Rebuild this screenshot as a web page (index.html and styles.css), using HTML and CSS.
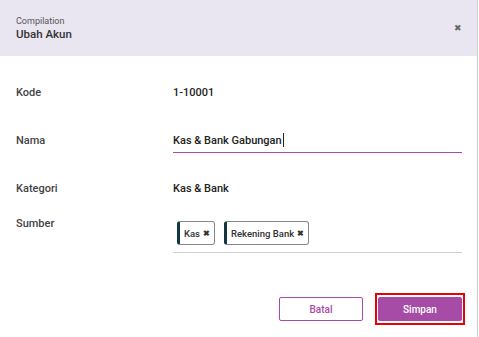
FILE: index.html
```html
<!DOCTYPE html>
<html lang="id">
<head>
  <meta charset="UTF-8">
  <title>Ubah Akun</title>
  <link rel="stylesheet" href="styles.css">
</head>
<body>
  <div class="dialog">
    <div class="header">
      <div class="titles">
        <div class="subtitle">Compilation</div>
        <div class="title">Ubah Akun</div>
      </div>
      <span class="close">&#x2716;</span>
    </div>

    <div class="form">
      <div class="row">
        <div class="label">Kode</div>
        <div class="value">1-10001</div>
      </div>
      <div class="row">
        <div class="label">Nama</div>
        <div class="value input">Kas &amp; Bank Gabungan<span class="caret"></span></div>
      </div>
      <div class="row">
        <div class="label">Kategori</div>
        <div class="value">Kas &amp; Bank</div>
      </div>
      <div class="row row-tags">
        <div class="label">Sumber</div>
        <div class="value tags">
          <span class="tag">Kas <b>&#x2716;</b></span>
          <span class="tag">Rekening Bank <b>&#x2716;</b></span>
        </div>
      </div>
    </div>

    <div class="actions">
      <button class="btn btn-outline">Batal</button>
      <span class="highlight"><button class="btn btn-primary">Simpan</button></span>
    </div>
  </div>
</body>
</html>
```

FILE: styles.css
```css
body {
  margin: 0;
  font-family: Roboto, "Liberation Sans", sans-serif;
  color: #333;
  background: #fff;
}
.dialog {
  width: 477px;
  height: 337px;
  border-right: 1px solid #cfcfcf;
  background: #fff;
}
.header {
  height: 56px;
  background: #e9e6f1;
  display: flex;
  align-items: center;
  justify-content: space-between;
  padding: 0 15px 0 16px;
}
.subtitle {
  font-size: 9px;
  color: #555;
  margin-bottom: 1px;
}
.title {
  font-size: 11.5px;
  font-weight: 500;
  color: #333;
}
.close {
  font-size: 9px;
  color: #666;
}
.form {
  padding: 12px 15px 0 16px;
}
.row {
  display: flex;
  align-items: center;
  height: 48px;
}
.label {
  width: 157px;
  font-size: 11px;
  font-weight: 500;
  color: #444;
}
.value {
  flex: 1;
  font-size: 11px;
  font-weight: 500;
  color: #222;
}
.input {
  border-bottom: 1px solid #a94aa8;
  padding: 6px 0 5px;
  display: flex;
  align-items: center;
}
.caret {
  display: inline-block;
  width: 1px;
  height: 14px;
  background: #222;
  margin-left: 1px;
}
.row-tags {
  align-items: flex-start;
  height: auto;
}
.row-tags .label {
  padding-top: 5px;
}
.tags {
  display: flex;
  gap: 9px;
  padding: 9px 0 7px 4px;
  border-bottom: 1px solid #d0d0d0;
}
.tag {
  display: inline-flex;
  align-items: center;
  gap: 3px;
  height: 24px;
  box-sizing: border-box;
  padding: 0 4px 0 4px;
  border: 1px solid #888;
  border-left: 3px solid #123743;
  border-radius: 3px;
  font-size: 9.5px;
  font-weight: 500;
  color: #333;
}
.tag b {
  font-size: 8px;
  color: #333;
}
.actions {
  display: flex;
  justify-content: flex-end;
  align-items: center;
  gap: 12px;
  padding: 40px 12px 0 0;
}
.btn {
  font-family: Roboto, "Liberation Sans", sans-serif;
  font-size: 10px;
  font-weight: 500;
  width: 84px;
  height: 24px;
  border-radius: 2px;
  cursor: pointer;
}
.btn-outline {
  background: #fff;
  border: 1px solid #a94aa8;
  color: #a94aa8;
}
.btn-primary {
  background: #a64ca6;
  border: 1px solid #a64ca6;
  color: #fff;
  display: block;
}
.highlight {
  display: inline-block;
  border: 2px solid #e8000b;
  padding: 2px 1px;
}
```
